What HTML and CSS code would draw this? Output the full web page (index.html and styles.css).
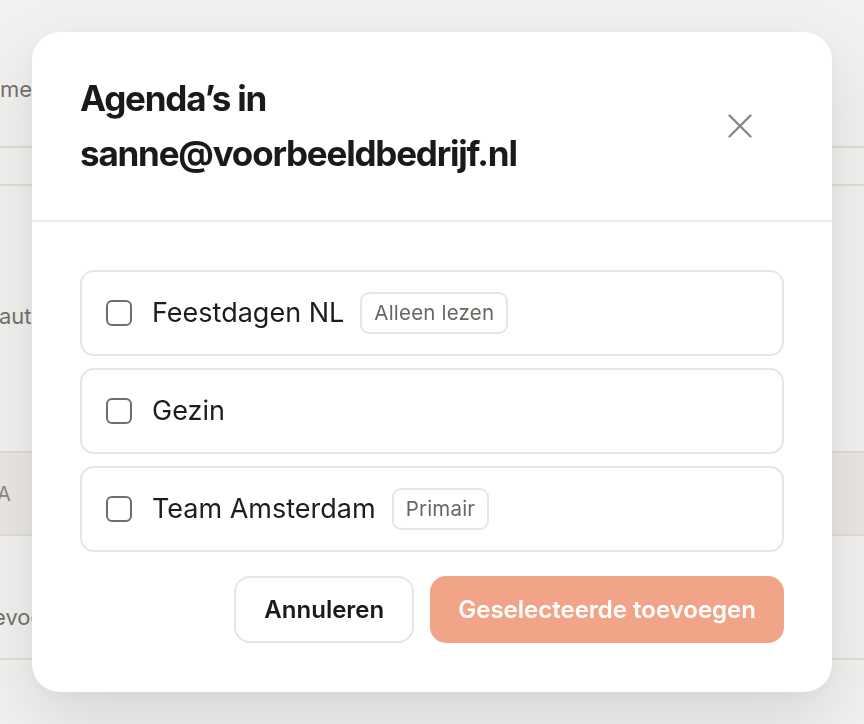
FILE: index.html
```html
<!DOCTYPE html>
<html lang="nl">
<head>
<meta charset="utf-8">
<title>Agenda's toevoegen</title>
<link rel="stylesheet" href="styles.css">
</head>
<body>
<div class="page">
  <div class="bg-row bg-row-top"><span class="bg-clip"><span class="bg-text">me</span></span></div>
  <div class="bg-row bg-row-thin"></div>
  <div class="bg-row bg-row-mid"><span class="bg-clip"><span class="bg-text bg-auto">auto</span></span></div>
  <div class="bg-row bg-row-head"><span class="bg-clip"><span class="bg-text bg-head">A</span></span></div>
  <div class="bg-row bg-row-low"><span class="bg-clip"><span class="bg-text bg-cut">evoo</span></span></div>
</div>

<div class="overlay">
  <div class="modal" role="dialog" aria-labelledby="modal-title">
    <div class="modal-header">
      <h2 class="modal-title" id="modal-title">Agenda’s in sanne@voorbeeldbedrijf.nl</h2>
      <button class="close-btn" aria-label="Sluiten">
        <svg width="24" height="24" viewBox="0 0 24 24" fill="none" stroke="currentColor" stroke-width="2.4" stroke-linecap="round"><path d="M1.5 1.5 L22.5 22.5 M22.5 1.5 L1.5 22.5"/></svg>
      </button>
    </div>
    <div class="modal-body">
      <div class="cal-list">
        <label class="cal-item">
          <span class="checkbox"></span>
          <span class="cal-name">Feestdagen NL</span>
          <span class="badge">Alleen lezen</span>
        </label>
        <label class="cal-item">
          <span class="checkbox"></span>
          <span class="cal-name">Gezin</span>
        </label>
        <label class="cal-item">
          <span class="checkbox"></span>
          <span class="cal-name">Team Amsterdam</span>
          <span class="badge">Primair</span>
        </label>
      </div>
      <div class="actions">
        <button class="btn btn-secondary">Annuleren</button>
        <button class="btn btn-primary">Geselecteerde toevoegen</button>
      </div>
    </div>
  </div>
</div>
</body>
</html>
```

FILE: styles.css
```css
* { box-sizing: border-box; }

html, body {
  margin: 0;
  padding: 0;
  height: 100%;
}

body {
  background: #f1f1f0;
  font-family: Inter, "Noto Sans", sans-serif;
  overflow: hidden;
}

/* background page (dimmed behind modal) */
.page {
  display: flex;
  flex-direction: column;
}

.bg-row {
  display: flex;
  align-items: center;
  border-bottom: 2px solid #e2ddd5;
}

.bg-row-top { height: 148px; align-items: flex-start; padding-top: 76px; }
.bg-row-thin { height: 38px; }
.bg-row-mid { height: 267px; }
.bg-row-head { height: 83px; background: #ebe8e3; }
.bg-row-low { height: 124px; align-items: flex-start; padding-top: 68px; }

.bg-clip {
  width: 32px;
  overflow: hidden;
  display: flex;
}

.bg-text {
  font-size: 22px;
  color: #76726c;
  white-space: nowrap;
  margin-left: 0;
}

.bg-auto { margin-left: -1px; margin-top: -6px; }
.bg-head { font-size: 20px; color: #8b867f; margin-left: -3px; }
.bg-cut { margin-left: -7px; }

/* overlay + modal */
.overlay {
  position: fixed;
  inset: 0;
  display: flex;
  justify-content: center;
  align-items: flex-start;
  padding-top: 32px;
}

.modal {
  width: 800px;
  background: #ffffff;
  border-radius: 28px;
  box-shadow: 0 28px 70px rgba(0, 0, 0, 0.11), 0 4px 16px rgba(0, 0, 0, 0.04);
}

.modal-header {
  display: flex;
  align-items: center;
  justify-content: space-between;
  padding: 39px 20px 39px 48px;
  border-bottom: 2px solid #efebe5;
}

.modal-title {
  margin: 0;
  max-width: 560px;
  font-family: Inter, sans-serif;
  font-size: 35px;
  font-weight: 700;
  line-height: 55px;
  letter-spacing: -1.2px;
  color: #1a1a1a;
}

.close-btn {
  width: 88px;
  height: 48px;
  padding: 0;
  border: none;
  background: transparent;
  color: #8c8780;
  display: flex;
  align-items: center;
  justify-content: center;
  margin-right: 28px;
}

.modal-body {
  padding: 48px 48px 49px;
  display: flex;
  flex-direction: column;
  gap: 24px;
}

.cal-list {
  display: flex;
  flex-direction: column;
  gap: 12px;
}

.cal-item {
  height: 86px;
  display: flex;
  align-items: center;
  padding: 0 24px;
  border: 2px solid #ebe6dd;
  border-radius: 14px;
}

.checkbox {
  width: 26px;
  height: 26px;
  border: 2px solid #6e6e6e;
  border-radius: 6px;
  flex: none;
}

.cal-name {
  margin-left: 20px;
  font-size: 27px;
  line-height: 34px;
  color: #1d1d1d;
  letter-spacing: 0;
}

.badge {
  margin-left: 16px;
  padding: 6px 12px;
  font-size: 20.5px;
  line-height: 26px;
  color: #6b6661;
  border: 2px solid #ebe6dd;
  border-radius: 9px;
  letter-spacing: 0.2px;
}

.actions {
  display: flex;
  justify-content: flex-end;
  gap: 16px;
}

.btn {
  font-family: Inter, sans-serif;
  font-size: 24px;
  font-weight: 600;
  line-height: 25px;
  padding: 19px 28px;
  border-radius: 16px;
  border: 2px solid transparent;
  cursor: pointer;
}

.btn-secondary {
  background: #ffffff;
  color: #1a1a1a;
  border-color: #ebe6dd;
}

.btn-primary {
  background: #f2a489;
  border-color: #f2a489;
  color: #ffffff;
  padding: 19px 26px;
  letter-spacing: 0;
}
```
